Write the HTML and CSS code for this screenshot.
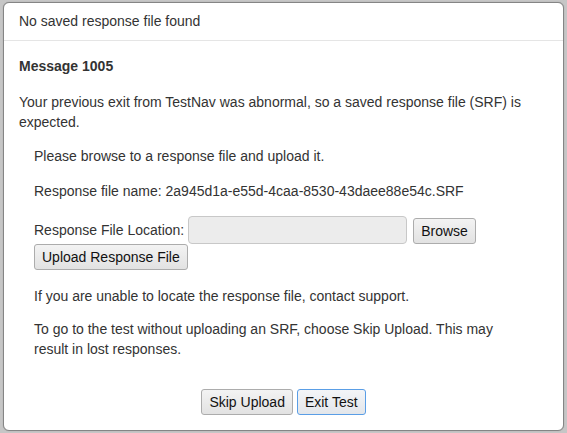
FILE: index.html
```html
<!DOCTYPE html>
<html>
<head>
<meta charset="utf-8">
<link rel="stylesheet" href="styles.css">
</head>
<body>
<div class="dialog">
  <div class="header">No saved response file found</div>
  <div class="body">
    <h4 class="title">Message 1005</h4>
    <p class="lead">Your previous exit from TestNav was abnormal, so a saved response file (SRF) is expected.</p>
    <div class="indent">
      <p class="p-browse">Please browse to a response file and upload it.</p>
      <p class="p-name">Response file name: 2a945d1a-e55d-4caa-8530-43daee88e54c.SRF</p>
      <div class="loc-row">
        <span class="loc-label">Response File Location:</span>
        <span class="file-input"></span>
        <button class="btn btn-browse">Browse</button>
      </div>
      <button class="btn btn-upload">Upload Response File</button>
      <p class="p-unable">If you are unable to locate the response file, contact support.</p>
      <p class="p-skip">To go to the test without uploading an SRF, choose Skip Upload. This may result in lost responses.</p>
    </div>
    <div class="footer">
      <button class="btn">Skip Upload</button>
      <button class="btn btn-focus">Exit Test</button>
    </div>
  </div>
</div>
</body>
</html>
```

FILE: styles.css
```css
html, body {
  margin: 0;
  padding: 0;
}
body {
  background: #c6c6c6;
  font-family: "Liberation Sans", Arial, sans-serif;
  font-size: 14px;
  line-height: 20px;
  color: #333;
  padding: 2px 3px 0 3px;
  height: 433px;
  box-sizing: border-box;
  overflow: hidden;
}
.dialog {
  width: 561px;
  height: 429px;
  box-sizing: border-box;
  background: #fff;
  border: 1px solid #858585;
  border-radius: 6px;
  box-shadow: 0 0 1px rgba(0,0,0,0.3);
}
.header {
  padding: 8px 15px 9px 15px;
  border-bottom: 1px solid #e5e5e5;
}
.body {
  padding: 15px 15px 0 15px;
}
.title {
  margin: 0;
  font-size: 14px;
  font-weight: bold;
  line-height: 20px;
}
.lead {
  margin: 16px 0 0 0;
}
.indent {
  padding: 0 30px 0 15px;
  margin-top: 14px;
}
.indent p {
  margin: 0;
}
.p-name {
  margin-top: 15px !important;
}
.loc-row {
  display: flex;
  align-items: center;
  margin-top: 15px;
  height: 28px;
}
.loc-label {
  margin-right: 4px;
}
.file-input {
  display: inline-block;
  width: 219px;
  height: 28px;
  box-sizing: border-box;
  background: #ececec;
  border: 1px solid #c8c8c8;
  border-radius: 4px;
}
.btn {
  font-family: "Liberation Sans", Arial, sans-serif;
  font-size: 14px;
  line-height: 20px;
  color: #111;
  height: 26px;
  padding: 0 7px;
  margin: 0;
  border: 1px solid #acacac;
  border-radius: 3px;
  background: linear-gradient(#f3f3f3, #e2e2e2);
  box-sizing: border-box;
}
.btn-browse {
  margin-left: 6px;
  margin-top: 1px;
  height: 26px;
}
.btn-upload {
  display: block;
}
.p-unable {
  margin-top: 16px !important;
}
.p-skip {
  margin-top: 13px !important;
}
.footer {
  margin-top: 30px;
  text-align: center;
  font-size: 0;
}
.footer .btn {
  margin: 0 2px;
  height: 26px;
}
.btn-focus {
  border-color: #5a9ee6;
  background: linear-gradient(#f3f5f8, #e3e6ea);
}
```
